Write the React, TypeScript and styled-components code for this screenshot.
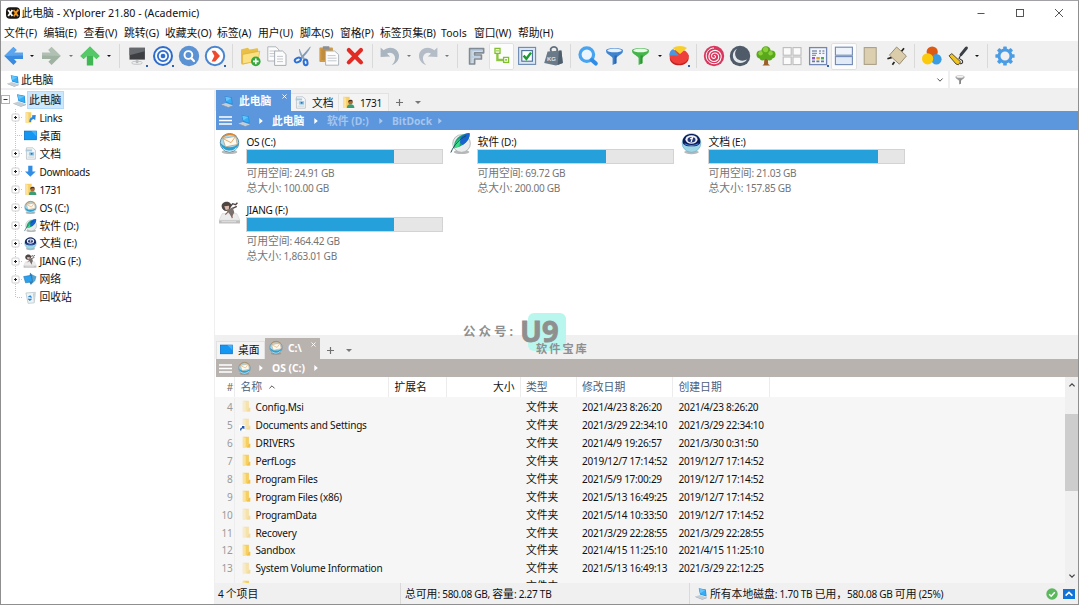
import React from 'react';
import styled, { createGlobalStyle, css } from 'styled-components';

const GlobalStyle = createGlobalStyle`
  * { box-sizing: border-box; }
  body { margin: 0; background: #fff; overflow: hidden; }
  svg { display: block; flex: none; overflow: visible; }
`;

const BLUE = '#5c96dc';
const TAUPE = '#b9b3b0';

/* ---------- text ---------- */

const Run = styled.span<{ $cjk: boolean; $track: number }>`
  font-size: ${p => (p.$cjk ? '10.8px' : '1em')};
  letter-spacing: ${p => (p.$cjk ? 0 : p.$track)}px;
`;

const LabelBox = styled.span<{ $color?: string; $bold?: boolean; $size: number }>`
  white-space: pre;
  line-height: 16px;
  color: ${p => p.$color ?? '#111'};
  font-weight: ${p => (p.$bold ? 700 : 400)};
  font-size: ${p => p.$size}px;
`;

type LabelProps = { text: string; color?: string; bold?: boolean; size?: number; track?: number };

function Label({ text, color, bold, size, track }: LabelProps) {
  const runs = text.split(/([\u3000-\u9fff\uff00-\uffef]+)/).filter(Boolean);
  const spacing = track ?? (bold ? 0 : -0.27);
  return (
    <LabelBox $color={color} $bold={bold} $size={size ?? (bold ? 10.3 : 10.05)}>
      {runs.map((r, i) => (
        <Run key={i} $cjk={/[\u3000-\uffef]/.test(r)} $track={spacing}>{r}</Run>
      ))}
    </LabelBox>
  );
}

/* ---------- small icons (16 unit grid) ---------- */

type IconProps = { size?: number };

const PcIcon = ({ size = 13 }: IconProps) => (
  <svg width={size} height={size} viewBox="0 0 16 16">
    <path d="M.4 11.6 L6 9.8 L14.8 12.8 L9 15z" fill="#c4ced7" />
    <path d="M.4 11.6 L9 15 L14.8 12.8 V13.6 L9 15.8 L.4 12.4z" fill="#8e9aa5" />
    <path d="M4.6 1.4 L13.4 3.2 L14.2 11.8 L6.2 9.2z" fill="#1e86d2" />
    <path d="M5.4 2.3 L12.8 3.8 L13.4 10.8 L6.8 8.6z" fill="#36aef6" />
    <path d="M5.4 2.3 L12.8 3.8 L6.6 7.6z" fill="#66c6fb" />
  </svg>
);

const FolderIcon = ({ size = 13, faded }: IconProps & { faded?: boolean }) => (
  <svg width={size} height={size} viewBox="0 0 16 16" opacity={faded ? 0.5 : 1}>
    <path d="M3.5 1 H11 V11.5 H12 V14 H3.5z" fill="#f6cf62" />
    <path d="M3.5 1 L7 2.5 V14.5 L3.5 13.7z" fill="#fbe39b" />
    <path d="M11 9.5 h1.7 v4.5 H8.5z" fill="#f3c044" />
  </svg>
);

const LinksIcon = () => (
  <svg width="13" height="13" viewBox="0 0 16 16">
    <path d="M2 1.5 H9 V14.5 H2z" fill="#f7cf63" />
    <path d="M2 1.5 L5.5 3 V15 L2 14.2z" fill="#fbe39b" />
    <path d="M6.5 13.5 c0-4 1.5-5.5 3.5-5.8 V5.2 L14.5 5 13.8 11.5 11.8 9.8 c-2 .6-3.4 1.5-3 3.7z" fill="#2f87dd" />
  </svg>
);

const UserFolderIcon = () => (
  <svg width="13" height="13" viewBox="0 0 16 16">
    <path d="M1.5 1 H9.5 V14.5 H1.5z" fill="#f7cf63" />
    <path d="M1.5 1 L5.2 2.5 V15 L1.5 14z" fill="#fbe39b" />
    <path d="M6 14.8 c0-4 2-4.8 4.5-4.8 s4.7 1 4.7 4.8z" fill="#3c9c74" />
    <circle cx="10.5" cy="7.6" r="2.7" fill="#a86a3a" />
    <path d="M7.6 7.5 C7.5 3.8 13.2 3.8 13.3 7 L11 6.2z" fill="#4a3020" />
  </svg>
);

const DesktopIcon = () => (
  <svg width="13" height="13" viewBox="0 0 16 16">
    <rect x=".6" y="2.6" width="14.6" height="10.6" fill="#1496f3" stroke="#0b72c8" />
    <path d="M9 2.6 H15.2 V9z" fill="#3db0ff" />
  </svg>
);

const DocIcon = () => (
  <svg width="13" height="13" viewBox="0 0 16 16">
    <path d="M3 1 H11 L14 4 V15 H3z" fill="#f4f8fa" stroke="#aab4bb" strokeWidth=".8" />
    <path d="M2 3 H10 V5.4 H2z" fill="#a9c9da" />
    <rect x="6.4" y="6.4" width="6" height="4.2" fill="#8ec3e4" />
    <rect x="8.4" y="7.4" width="2" height="2" fill="#2471b0" />
    <path d="M4.5 12.4 h8 M4.5 7.5 h1 M4.5 9.5 h1" stroke="#b8c0c6" strokeWidth=".9" />
  </svg>
);

const DownIcon = () => (
  <svg width="13" height="13" viewBox="0 0 16 16">
    <path d="M5.2 1 h5.2 v7 h4 L7.8 14.5 1.2 8 h4z" fill="#2f8de4" />
  </svg>
);

const MailDrive = ({ size = 14 }: IconProps) => (
  <svg width={size} height={size} viewBox="0 0 20 20">
    <ellipse cx="10" cy="18" rx="7.5" ry="2" fill="#8b8b8b" opacity=".6" />
    <circle cx="10" cy="9.3" r="8.8" fill="#a9dcef" stroke="#3e7c98" strokeWidth=".8" />
    <path d="M1.5 9.5 C3 19 17 20 18.6 9.5 C15 14.5 7 15.5 1.5 9.5z" fill="#2a9fd0" />
    <path d="M4 15 C7 18.4 14 18 16.6 14" stroke="#cfeefa" strokeWidth="1" fill="none" />
    <path d="M3.6 5.2 L15.8 3.2 L17.4 11 L6.2 13.2z" fill="#fffaf0" stroke="#b0906a" strokeWidth=".6" />
    <path d="M3.6 5.2 L11.5 9.2 L15.8 3.2" fill="none" stroke="#dd9a55" strokeWidth=".8" />
    <path d="M3 4.4 C6.4 .3 13.4 .4 16.6 3.2" stroke="#e0862e" strokeWidth="1.2" fill="none" />
  </svg>
);

const FeatherDrive = ({ size = 14 }: IconProps) => (
  <svg width={size} height={size} viewBox="0 0 20 20">
    <ellipse cx="11" cy="18" rx="7.5" ry="2" fill="#8b8b8b" opacity=".6" />
    <circle cx="11" cy="10" r="8.4" fill="#e9ecec" stroke="#a9afb0" strokeWidth=".8" />
    <path d="M4 14 C3 7 9 0.5 18.5 0 C20 6 12 14 4 14z" fill="#18a070" />
    <path d="M8 7.5 C11 2.4 14 .6 18.5 0 C19.6 4 16.5 8.5 12 11.5z" fill="#1763cf" />
    <path d="M4.6 12 C5 9 7.5 6 10 5 L9 12.6 C7 13.6 5.5 14 4.4 14z" fill="#3fd98a" />
    <path d="M.8 18.6 C4 11 9 6 15.5 2.5" stroke="#0c4a52" strokeWidth=".9" fill="none" />
  </svg>
);

const OrbDrive = ({ size = 14 }: IconProps) => (
  <svg width={size} height={size} viewBox="0 0 20 20">
    <ellipse cx="10" cy="18.2" rx="7" ry="2" fill="#8b8b8b" opacity=".6" />
    <circle cx="10" cy="9.5" r="8.9" fill="#9ed6e8" stroke="#6fb0c8" strokeWidth=".7" />
    <path d="M1.6 8 C1.8 -1.4 18.2 -1.4 18.4 8 C18.6 12 14 12.6 10 12.6 S1.4 12 1.6 8z" fill="#0c1a58" />
    <ellipse cx="10" cy="6.2" rx="5.8" ry="4" fill="#eef3fb" />
    <ellipse cx="10" cy="6.4" rx="3.8" ry="2.6" fill="#24397c" />
    <path d="M8.8 5.6 L11 4.4 L9.6 8.6" stroke="#fff" strokeWidth="1.1" fill="none" />
    <path d="M3.4 10.2 C7 12.4 13 12.4 16.6 10.2" stroke="#4c7fd4" strokeWidth="1" fill="none" />
  </svg>
);

const FigureDrive = ({ size = 14 }: IconProps) => (
  <svg width={size} height={size} viewBox="0 0 20 22">
    <path d="M3 12 H17 L20 18.5 H0z" fill="#ececec" stroke="#cfcfcf" strokeWidth=".5" />
    <path d="M0 18.5 H20 V21.5 H0z" fill="#bdbdbd" />
    <path d="M2.4 19.8 h14" stroke="#e9e9e9" strokeWidth=".8" />
    <path d="M2.5 5.5 C2 .5 9 -.6 11 2.4 C12.6 4.5 11 7 10 8 L7.2 9.5 C4.5 9.5 3 8 2.5 5.5z" fill="#4d4544" />
    <path d="M5 5 L9.6 4.6 L9.4 8.2 L6.4 8.6z" fill="#d9b9aa" />
    <path d="M11 5 L13 2.6 15.8 3.6 17.6 1.6 M13 7 L17 5.2" stroke="#4d4544" strokeWidth="1.3" fill="none" />
    <path d="M7 9 L13 6 L14.6 11 L12 15.6 L9.8 12z" fill="#7a706e" />
    <path d="M12 12 L12.6 16.4 M9 10 L6 13" stroke="#8b6257" strokeWidth="1.1" />
  </svg>
);

const NetIcon = () => (
  <svg width="14" height="14" viewBox="0 0 16 16">
    <path d="M8 .8 L11 3 L15.4 5 L14 10 L9 14.6 L7.6 11z" fill="#5aa3cf" />
    <path d="M8 .8 L10.4 4 L10.8 11.8 L9 14.6 L7 11z" fill="#3a7fae" />
    <path d="M.8 5.2 L9.5 3.8 L10.8 11 L3 12.4z" fill="#2aa0ee" stroke="#1f77b4" strokeWidth=".7" />
  </svg>
);

const BinIcon = () => (
  <svg width="13" height="13" viewBox="0 0 16 16">
    <path d="M2.4 2.4 L14 1.6 L12.6 14.6 L5 15.2z" fill="#eef3f5" stroke="#b6c1c6" strokeWidth=".9" />
    <path d="M11 3 L13.4 2.6 L12.2 14z" fill="#c4ced3" />
    <path d="M5.4 7.4 L7.6 6.2 L9.2 8.2 M9.2 9.6 L7.2 11.2 L5.4 9.4" stroke="#2a85d0" strokeWidth="1.7" fill="none" />
  </svg>
);

const Funnel = ({ size, fill, rim, dark }: { size: number; fill: string; rim: string; dark: string }) => (
  <svg width={size} height={size} viewBox="0 0 20 20">
    <path d="M1 4.4 C1 7.4 8 9.6 8 11.8 V19 L12 17 V11.8 C12 9.6 19 7.4 19 4.4z" fill={fill} />
    <path d="M10 9 H12.6 L12 11.8 V17 L10 18z" fill={dark} />
    <ellipse cx="10" cy="3.8" rx="9" ry="2.8" fill={fill} />
    <ellipse cx="10" cy="3.6" rx="7.6" ry="1.9" fill={rim} />
  </svg>
);

/* ---------- toolbar icons (20 unit grid) ---------- */

const tb = (children: React.ReactNode) => (
  <svg width="20" height="20" viewBox="0 0 20 20">{children}</svg>
);

const BackArrow = tb(
  <>
    <path d="M.3 10 L9.4 .9 L12.6 4.1 L10 6.8 H19 V13 H10 L12.6 15.8 L9.4 19z" fill="#3a8be0" />
    <path d="M.3 10 L9.4 .9 L12.6 4.1 L10 6.8 H19 V9.5z" fill="#5aa5ee" />
  </>,
);
const ForwardArrow = tb(
  <>
    <path d="M19.7 10 L10.6 .9 L7.4 4.1 L10 6.8 H1 V13 H10 L7.4 15.8 L10.6 19z" fill="#a0b3a3" />
    <path d="M19.7 10 L10.6 .9 L7.4 4.1 L10 6.8 H1 V9.5z" fill="#b0c0b2" />
  </>,
);
const UpArrow = tb(
  <>
    <path d="M10 .4 L19.6 10 L16.4 13 L13.2 10 V19.4 H6.8 V10 L3.6 13 L.4 10z" fill="#3fb854" />
    <path d="M10 .4 L19.6 10 L16.4 13 L13.2 10 H6.8 L3.6 13 L.4 10z" fill="#55c968" />
  </>,
);
const Monitor = tb(
  <>
    <rect x="2.5" y="1.8" width="15.4" height="11.8" fill="#3c3e41" />
    <path d="M2.5 1.8 H17.9 V5.2 L2.5 9.2z" fill="#66696d" />
    <ellipse cx="10" cy="16.8" rx="5.4" ry="1.6" fill="none" stroke="#c3c6ca" strokeWidth="1" />
    <path d="M8.8 14.2 h2.6 v3 h-2.6z" fill="#b9bcc0" />
  </>,
);
const Target = tb(
  <>
    <circle cx="10" cy="10" r="10" fill="#2e6ccb" />
    <circle cx="10" cy="10" r="7" fill="none" stroke="#f4f8ff" strokeWidth="2" />
    <circle cx="10" cy="10" r="3.3" fill="none" stroke="#f4f8ff" strokeWidth="1.9" />
  </>,
);
const FindCircle = tb(
  <>
    <circle cx="10" cy="10" r="10.2" fill="#5a92d4" />
    <circle cx="9.4" cy="9" r="3.9" fill="none" stroke="#fff" strokeWidth="1.9" />
    <path d="M12.4 12.2 L15 15" stroke="#fff" strokeWidth="2.2" strokeLinecap="round" />
  </>,
);
const GoCircle = tb(
  <>
    <circle cx="10" cy="10" r="9.2" fill="#fff" stroke="#4a86d0" strokeWidth="2" />
    <path d="M6.6 4.8 h3.6 L15 10 l-4.8 5.4 H6.6 L9.4 10z" fill="#ee4a2c" />
  </>,
);
const NewFolder = tb(
  <>
    <path d="M1 5 C1 3.6 1.4 3 2.6 3 L8 1.8 L9.4 3.6 L17 2.2 C18 2.2 18.2 2.8 18.2 3.8 L17.4 15 L3 18.6 C1.6 18.6 1 18 1 16.6z" fill="#e9bf45" />
    <path d="M2.6 8.4 L19.8 5.2 L18 14.8 L2.6 18z" fill="#fbe184" stroke="#d8ab36" strokeWidth=".6" />
    <circle cx="15.8" cy="15.4" r="4.8" fill="#36a83c" />
    <path d="M15.8 12.6 v5.6 M13 15.4 h5.6" stroke="#fff" strokeWidth="1.6" />
  </>,
);
const pageLines = (x: number, y: number) => (
  <path d={`M${x} ${y} h6 M${x} ${y + 2.6} h6 M${x} ${y + 5.2} h6`} stroke="#c4c9ce" strokeWidth="1" />
);
const Copy = tb(
  <>
    <path d="M.8 .8 H9 L12 4 V15 H.8z" fill="#fcfcfc" stroke="#b0b6bb" />
    {pageLines(2.6, 5)}
    <path d="M7.6 5 H15.6 L19 8.4 V19.4 H7.6z" fill="#fcfcfc" stroke="#a8aeb4" />
    {pageLines(10, 10.4)}
  </>,
);
const Cut = tb(
  <>
    <path d="M17.4 .8 C16 5 12 9 8.2 13.4 L6.8 12.6z" fill="#7f97b4" stroke="#7d93ae" strokeWidth=".5" />
    <path d="M6.4 3 C7.6 7 10 11 13 14 L11.4 14.4 C8 10.6 6.4 7 6.4 3z" fill="#8fa6c0" stroke="#8399b4" strokeWidth=".6" />
    <ellipse cx="4.8" cy="14" rx="3.2" ry="2.1" fill="none" stroke="#2d72d6" strokeWidth="2" transform="rotate(-25 4.8 14)" />
    <ellipse cx="12.6" cy="16.4" rx="1.9" ry="2.8" fill="none" stroke="#2d72d6" strokeWidth="2" transform="rotate(-10 12.6 16.4)" />
  </>,
);
const Paste = tb(
  <>
    <rect x=".4" y="1.4" width="13.6" height="14.6" rx="1" fill="#d09a48" />
    <rect x="2.4" y="3.4" width="9.8" height="10.6" fill="#c08c40" />
    <rect x="3.8" y=".2" width="6.6" height="3" rx=".6" fill="#8b8e92" />
    <path d="M6.6 5 H15.6 L19.6 8.6 V19.2 H6.6z" fill="#fdfdfd" stroke="#aeb4ba" />
    <path d="M8.6 9.6 h8 M8.6 12.2 h9 M8.6 14.8 h9" stroke="#c4c9ce" />
  </>,
);
const Delete = tb(
  <path d="M3.8 4 L16 16.4 M16 4 L3.8 16.4" stroke="#e12b25" strokeWidth="4.1" strokeLinecap="round" />,
);
const Undo = tb(
  <path d="M.6 1.4 L3.6 4.2 C9 -.6 18.6 1.4 19 9.6 C19.2 14 16 18 11.8 19 C15 16 15.6 12.6 14.6 10 C13 6.4 9 6 7 7.8 L10.2 10.6 L.6 11z" fill="#a9b5c1" />,
);
const Redo = tb(
  <path d="M19.4 1.4 L16.4 4.2 C11 -.6 1.4 1.4 1 9.6 C.8 14 4 18 8.2 19 C5 16 4.4 12.6 5.4 10 C7 6.4 11 6 13 7.8 L9.8 10.6 L19.4 11z" fill="#b3bcc7" />,
);
const LetterF = tb(
  <>
    <path d="M3.6 2.6 H17.6 V6.8 H8.6 V9 H15.4 V13 H8.6 V18 H3.6z" fill="#d8e2ec" stroke="#828b94" strokeWidth="1.7" strokeLinejoin="round" />
    <path d="M5.8 16.4 V4.7 H16 M6 11 H14" stroke="#b7cbe0" strokeWidth="1.3" fill="none" />
  </>,
);
const TreeNodes = tb(
  <>
    <path d="M5.4 7 V14 H12" stroke="#8cc63f" strokeWidth="2.4" fill="none" />
    <rect x="3" y="2.4" width="5" height="5" fill="#fff" stroke="#7fbf2a" strokeWidth="1.3" />
    <path d="M4 4.9 h3" stroke="#7fbf2a" />
    <rect x="11.6" y="11.4" width="5" height="5" fill="#fff" stroke="#7fbf2a" strokeWidth="1.3" />
    <path d="M13.1 13.9 h2" stroke="#7fbf2a" strokeWidth="1.5" />
  </>,
);
const CheckBox = tb(
  <>
    <rect x="1.6" y="1.4" width="17" height="17" fill="#dbe6f4" stroke="#6c89b2" strokeWidth="1.1" />
    <rect x="4.8" y="4.6" width="10.6" height="10.6" fill="#fff" stroke="#4c6c9c" strokeWidth="1.1" />
    <path d="M6.6 9.6 L9.4 12.8 L14 6.6" stroke="#1c9c30" strokeWidth="2.4" fill="none" />
  </>,
);
const Weight = tb(
  <>
    <path d="M8.6 6 C6 2.6 9 .9 11 .9 S15.6 2.6 13.6 6" fill="none" stroke="#5d6d7c" strokeWidth="1.7" />
    <path d="M4.6 5.6 L18.4 4.6 L19.8 17 L13 19.4 L1.2 17z" fill="#6a7a89" />
    <path d="M16 4.8 L18.4 4.6 L19.8 17 L14.6 19z" fill="#4f5e6c" />
    <text x="4" y="14.6" fontSize="6" fontWeight="700" fill="#dfe5ea" fontFamily="Liberation Sans, sans-serif">KG</text>
  </>,
);
const Search = tb(
  <>
    <circle cx="8.8" cy="8.6" r="6.8" fill="#eaf5fd" stroke="#46a4f0" strokeWidth="3.2" />
    <path d="M13.8 14 L17.8 17.6" stroke="#2f8de6" strokeWidth="4" strokeLinecap="round" />
  </>,
);
const Pie = tb(
  <>
    <path d="M.8 9.6 V13 C2 21.4 18 21.4 19.6 13 V9z" fill="#c22222" />
    <ellipse cx="10.2" cy="10.6" rx="9.4" ry="7.4" fill="#ee3f3a" />
    <path d="M10 9.4 L.2 9.4 C.4 6 1.8 4.2 4.2 3z" fill="#4a98dc" />
    <path d="M11 8 L3.8 2 C7.5 -.8 14.6 -.8 18 2z" fill="#f8cf2a" />
  </>,
);
const Spiral = tb(
  <>
    <circle cx="10" cy="10" r="10.2" fill="#d8385e" />
    <path d="M10 10 c.6-.9 1.9 0 1.5 1.2 c-.6 1.8-3.4 1.5-3.9-.5 c-.6-2.8 2.4-4.5 4.8-3.4 c3.3 1.6 3 6.2-.2 7.7 c-4 1.8-8-1.5-7.2-5.7 c.9-4.6 6.4-6.4 10-3.4 c3.4 3 2.6 8.4-1 10.8" fill="none" stroke="#fff" strokeWidth="1.05" />
    <path d="M14 16.7 C9 19.6 2.2 16 2.2 10 C2.2 5 6 2 10 2" fill="none" stroke="#fff" strokeWidth="1" />
  </>,
);
const Moon = tb(
  <>
    <circle cx="10" cy="10" r="10.2" fill="#4f5b69" />
    <path d="M7 2.8 C1.4 5.8 1.8 13.4 6.4 16 C10.4 18.2 15 16.6 17 13.6 C13.4 15.6 8.4 15 6.2 11.6 C4.4 8.6 4.8 5.4 7 2.8z" fill="#e4e8ed" />
  </>,
);
const Tree = tb(
  <>
    <path d="M8.4 12 H11.8 L12.2 18 L14 19.4 H6.4 L8 18z" fill="#9a5f2b" />
    <g fill="#5aa81c">
      <circle cx="10" cy="4.8" r="4.6" /><circle cx="4.6" cy="8.6" r="4.1" /><circle cx="15.4" cy="8.6" r="4.1" />
      <circle cx="6.6" cy="11.6" r="3" /><circle cx="13.4" cy="11.6" r="3" /><circle cx="10" cy="9" r="4" />
    </g>
    <g fill="#8bd03a"><circle cx="9.6" cy="3.6" r="2.6" /><circle cx="4.6" cy="7.2" r="2.2" /><circle cx="14.6" cy="7.2" r="2.2" /></g>
  </>,
);
const Grid4 = tb(
  <g fill="#fbfbfb" stroke="#bcbcbc" strokeWidth="1.1">
    <rect x="1.2" y="1.6" width="8" height="7.6" /><rect x="11" y="1.6" width="8" height="7.6" />
    <rect x="1.2" y="11" width="8" height="7.6" /><rect x="11" y="11" width="8" height="7.6" />
  </g>,
);
const ListView = tb(
  <>
    <rect x="1.6" y="1.6" width="17" height="17" fill="#f3f6fc" stroke="#7387b4" strokeWidth="1.3" />
    <path d="M4 5 h5 M4 7.4 h5 M4 9.4 h4 M11 5 h2 M14.4 5 h2 M11 7.4 h2 M14.4 7.4 h2" stroke="#8a94ac" strokeWidth="1.4" />
    <rect x="4" y="11" width="3" height="2.4" fill="#9a59b8" /><rect x="8.4" y="11" width="3.4" height="2.4" fill="#e0a520" /><rect x="13" y="11" width="3" height="2.4" fill="#4fb042" />
    <path d="M4 15.4 h3 M8.4 15.4 h3 M13 15.4 h3" stroke="#6b7896" strokeWidth="1.6" />
  </>,
);
const SplitView = tb(
  <>
    <rect x="1.4" y="1.2" width="17" height="8" fill="#eff4fb" stroke="#7189b4" strokeWidth="1.1" />
    <rect x="1.4" y="10.6" width="17" height="8" fill="#e1eaf7" stroke="#7189b4" strokeWidth="1.1" />
  </>,
);
const Sheet = tb(
  <rect x="4.2" y="1.6" width="12" height="16.8" fill="#dccfb0" stroke="#a79b82" strokeWidth="1" />,
);
const RotSheet = tb(
  <>
    <path d="M.4 12.8 L5 11.4 M17 2.2 L14.4 5.6 M5.4 18.8 L7.4 16" stroke="#26221c" strokeWidth="1.7" />
    <path d="M9.6 1 L19.4 10 L12.4 18.2 L2.4 9.2z" fill="#dccdaa" stroke="#8f846e" strokeWidth=".9" />
  </>,
);
const Circles = tb(
  <>
    <circle cx="10.2" cy="6" r="5.6" fill="#dc5a14" />
    <circle cx="14.4" cy="13.2" r="5.2" fill="#3a9ce2" />
    <circle cx="5.6" cy="12.8" r="5.6" fill="#fbca0c" />
  </>,
);
const Brush = tb(
  <>
    <path d="M13 8.6 L18.4 2" stroke="#3a3f46" strokeWidth="3" strokeLinecap="round" />
    <path d="M12.8 9 L11 12.4 L14.4 14.6 C15.4 17 13.6 18 12 17.6" stroke="#333" strokeWidth="1.1" fill="none" />
    <path d="M1 9.8 L3.8 7.6 L12.6 15.8 L10.4 18.8 L8 18z" fill="#f2c21e" stroke="#45402f" strokeWidth=".9" />
  </>,
);
const Gear = tb(
  <>
    <circle cx="10" cy="10" r="6" fill="none" stroke="#4a9ce4" strokeWidth="3" />
    {[0, 45, 90, 135, 180, 225, 270, 315].map(a => (
      <rect key={a} x="8.2" y=".4" width="3.6" height="3.6" rx=".6" fill="#4a9ce4" transform={`rotate(${a} 10 10)`} />
    ))}
  </>,
);

/* ---------- window chrome ---------- */

const Frame = styled.div`
  width: 1079px;
  height: 605px;
  border: 1px solid #8f8f8f;
  border-top-color: #a2a2a6;
  display: flex;
  flex-direction: column;
  position: relative;
  overflow: hidden;
  background: #fff;
  font-family: 'Noto Sans', 'Noto Sans CJK SC', sans-serif;
`;

const TitleBar = styled.div`
  height: 24px;
  display: flex;
  align-items: center;
  padding-left: 5px;
  gap: 1.5px;
  flex: none;
`;

const Controls = styled.div`
  margin-left: auto;
  display: grid;
  grid-template-columns: repeat(3, 39.3px);
  justify-items: center;
  align-items: center;
  margin-right: -1px;
`;

const MenuBar = styled.div`
  height: 16px;
  display: grid;
  grid-template-columns: 39.5px 40px 40.5px 41px 52px 41px 42px 40px 40px 61px 33px 44px 60px;
  align-items: center;
  padding-left: 3px;
  flex: none;
`;

const Toolbar = styled.div`
  height: 30px;
  display: flex;
  align-items: center;
  background: #f0f0f0;
  flex: none;
`;

const ToolButton = styled.div<{ $w: number; $active?: boolean; $menu?: boolean }>`
  width: ${p => p.$w}px;
  height: 27px;
  display: flex;
  align-items: center;
  justify-content: center;
  position: relative;
  border-radius: 2px;
  ${p => p.$active && css`background: #fcfcfc; box-shadow: inset 0 0 0 1px #e0e0e0;`}
  ${p => p.$menu && css`
    &::after { content: ''; position: absolute; right: 2px; bottom: 3px; width: 2px; height: 1.5px; background: #2f5fae; }
  `}
`;

const Caret = styled.div<{ $w: number; $dim?: boolean }>`
  width: ${p => p.$w}px;
  display: flex;
  justify-content: center;
  &::before {
    content: '';
    border: 2px solid transparent;
    border-top-color: ${p => (p.$dim ? '#777' : '#111')};
    border-bottom: 0;
  }
`;

const Divider = styled.div<{ $w: number }>`
  width: ${p => p.$w}px;
  height: 24px;
  display: flex;
  justify-content: center;
  &::before { content: ''; width: 1px; background: #d9d9d9; }
`;

type Tool = { k: 'b' | 'c' | 's'; w: number; icon?: React.ReactNode; active?: boolean; menu?: boolean; dim?: boolean };
const b = (w: number, icon: React.ReactNode, extra: Partial<Tool> = {}): Tool => ({ k: 'b', w, icon, ...extra });
const c = (w: number, dim = false): Tool => ({ k: 'c', w, dim });
const s = (w: number): Tool => ({ k: 's', w });

const tools: Tool[] = [
  b(26, BackArrow), c(10), b(28, ForwardArrow), c(11, true), b(28, UpArrow), c(10), s(10),
  b(26, Monitor, { menu: true }), b(26, Target, { menu: true }), b(26, FindCircle), b(26, GoCircle, { menu: true }), s(9),
  b(26, NewFolder), b(27, Copy), b(26, Cut), b(26, Paste), b(25, Delete), s(10),
  b(25, Undo), c(13, true), b(26, Redo), c(12, true), s(9),
  b(27, LetterF), b(25, TreeNodes, { active: true }), b(26, CheckBox), b(25, Weight), s(10),
  b(26, Search), b(26, <Funnel size={19} fill="#3f83cf" dark="#2c66ad" rim="#e8f1fb" />),
  b(26, <Funnel size={19} fill="#43b649" dark="#2d9434" rim="#eaf8ea" />), c(13), b(26, Pie, { menu: true }), s(8),
  b(27, Spiral), b(26, Moon), b(26, Tree), b(26, Grid4), b(26, ListView, { menu: true }), b(26, SplitView, { active: true }),
  b(26, Sheet), b(27, RotSheet), s(9), b(26, Circles), b(26, Brush), c(12), s(9), b(25, Gear),
];

const AddressBar = styled.div`
  height: 19px;
  display: flex;
  flex: none;
  border-bottom: 2px solid #efefef;
`;

const AddressField = styled.div`
  flex: 1;
  display: flex;
  align-items: center;
  gap: 1px;
  padding: 1px 5px 0 6px;
  & > svg:last-child { margin-left: auto; }
`;

const FilterField = styled.div`
  width: 130px;
  display: flex;
  align-items: center;
  padding-left: 5px;
  border-left: 2px solid #efefef;
`;

const Body = styled.div`
  flex: 1;
  min-height: 0;
  display: flex;
`;

/* ---------- folder tree ---------- */

const TreePanel = styled.div`
  width: 214px;
  flex: none;
  border-right: 1px solid #efefef;
  padding-top: 1px;
`;

const TreeRow = styled.div`
  height: 17.95px;
  display: flex;
  align-items: center;
`;

const RootName = styled.div`
  height: 18px;
  padding: 0 2px 0 1px;
  display: flex;
  align-items: center;
  background: #cce8ff;
  border: 1px solid #b4dcfa;
`;

const Plus = () => (
  <svg width="9" height="9" viewBox="0 0 9 9">
    <rect x="1" y="1" width="7" height="7" rx="1" fill="#fff" stroke="#cfcfcf" />
    <path d="M3 4.5 h3 M4.5 3 v3" stroke="#222" />
  </svg>
);

const Minus = () => (
  <svg width="9" height="9" viewBox="0 0 9 9">
    <rect x=".5" y=".5" width="8" height="8" fill="#fff" stroke="#a6b5cc" />
    <path d="M2.5 4.5 h4" stroke="#333" />
  </svg>
);

const Guide = styled.div<{ $last?: boolean }>`
  width: 22px;
  height: 100%;
  display: flex;
  align-items: center;
  justify-content: flex-end;
  padding-right: 3px;
  background:
    repeating-linear-gradient(to bottom, #c4c4c4 0 1px, transparent 1px 2px) 14px 0 / 1px ${p => (p.$last ? '50%' : '100%')} no-repeat,
    repeating-linear-gradient(to right, #c4c4c4 0 1px, transparent 1px 2px) 16px 50% / 6px 1px no-repeat;
`;

const TreeIconCell = styled.div`
  width: 14px;
  display: flex;
  justify-content: center;
  margin-right: 2.5px;
`;

const treeItems: { name: string; icon: React.ReactNode; plus: boolean }[] = [
  { name: 'Links', icon: <LinksIcon />, plus: true },
  { name: '桌面', icon: <DesktopIcon />, plus: false },
  { name: '文档', icon: <DocIcon />, plus: true },
  { name: 'Downloads', icon: <DownIcon />, plus: true },
  { name: '1731', icon: <UserFolderIcon />, plus: true },
  { name: 'OS (C:)', icon: <MailDrive size={13} />, plus: true },
  { name: '软件 (D:)', icon: <FeatherDrive size={13} />, plus: true },
  { name: '文档 (E:)', icon: <OrbDrive size={13} />, plus: true },
  { name: 'JIANG (F:)', icon: <FigureDrive size={14} />, plus: true },
  { name: '网络', icon: <NetIcon />, plus: true },
  { name: '回收站', icon: <BinIcon />, plus: false },
];

/* ---------- panes ---------- */

const Panes = styled.div`
  flex: 1;
  min-width: 0;
  display: flex;
  flex-direction: column;
`;

const TabStrip = styled.div<{ $h: number }>`
  height: ${p => p.$h}px;
  display: flex;
  align-items: flex-end;
  background: #f0f0f0;
  padding-left: 1px;
  flex: none;
`;

const Tab = styled.div<{ $w: number; $active?: string; $lift?: boolean }>`
  width: ${p => p.$w}px;
  height: ${p => (p.$active ? '21px' : '18px')};
  padding-left: ${p => (p.$active ? 4 : 3)}px;
  padding-bottom: ${p => (p.$lift ? 2 : 0)}px;
  display: flex;
  align-items: center;
  gap: 5px;
  position: relative;
  background: ${p => p.$active ?? '#f4f4f4'};
  border: 1px solid ${p => p.$active ?? '#e2e2e2'};
  border-bottom: 0;
  & + & { border-left: 0; }
`;

const Close = styled.svg`
  position: absolute;
  right: 3px;
  top: 3px;
`;

const CloseMark = () => (
  <Close width="5" height="5" viewBox="0 0 5 5">
    <path d="M.5 .5 L4.5 4.5 M4.5 .5 L.5 4.5" stroke="#fff" strokeWidth=".9" />
  </Close>
);

const TabExtras = styled.div`
  height: 18px;
  display: flex;
  align-items: center;
  gap: 12px;
  padding: 1px 0 0 7px;
`;

const Extras = () => (
  <TabExtras>
    <svg width="7" height="7" viewBox="0 0 7 7"><path d="M3.5 0 V7 M0 3.5 H7" stroke="#707070" strokeWidth="1.2" /></svg>
    <svg width="6" height="3" viewBox="0 0 6 3"><path d="M0 0 H6 L3 3z" fill="#777" /></svg>
  </TabExtras>
);

const Crumbs = styled.div<{ $bg: string; $h: number }>`
  height: ${p => p.$h}px;
  margin-left: 1px;
  display: flex;
  align-items: center;
  background: ${p => p.$bg};
  padding-left: 3px;
  flex: none;
`;

const CrumbCell = styled.div<{ $w: number }>`
  width: ${p => p.$w}px;
  display: flex;
  align-items: center;
`;

const Burger = () => (
  <svg width="13" height="9" viewBox="0 0 13 9"><path d="M0 1 H13 M0 4.5 H13 M0 8 H13" stroke="#fff" strokeWidth="1.4" /></svg>
);

const CrumbArrow = ({ dim }: { dim?: boolean }) => (
  <svg width="4" height="6" viewBox="0 0 4 6"><path d="M.3 0 L3.8 3 L.3 6z" fill={dim ? '#a9c8ee' : '#fff'} /></svg>
);

const DriveArea = styled.div`
  height: 205px;
  flex: none;
  display: grid;
  grid-template-columns: repeat(3, 231px);
  grid-auto-rows: 68px;
  padding: 3px 0 0 4px;
`;

const DriveCard = styled.div`
  display: flex;
  gap: 6.4px;
`;

const DriveIcon = styled.div`
  width: 21px;
  display: flex;
  justify-content: center;
`;

const DriveInfo = styled.div`
  width: 197px;
  display: flex;
  flex-direction: column;
`;

const DriveName = styled.div`
  height: 16px;
  padding-top: 1px;
  display: flex;
  align-items: center;
`;

const Meter = styled.div`
  height: 15px;
  margin-bottom: 1px;
  background: #e6e6e6;
  border: 1px solid #d3d3d3;
  flex: none;
`;

const MeterFill = styled.div`
  height: 13px;
  background: #26a0da;
`;

const DriveLine = styled.div`
  height: 15.4px;
  display: flex;
  align-items: center;
`;

const drives = [
  { name: 'OS (C:)', used: 75.1, free: '24.91 GB', total: '100.00 GB', icon: <MailDrive size={21} /> },
  { name: '软件 (D:)', used: 65.2, free: '69.72 GB', total: '200.00 GB', icon: <FeatherDrive size={21} /> },
  { name: '文档 (E:)', used: 86.7, free: '21.03 GB', total: '157.85 GB', icon: <OrbDrive size={21} /> },
  { name: 'JIANG (F:)', used: 75.1, free: '464.42 GB', total: '1,863.01 GB', icon: <FigureDrive size={23} /> },
];

const ListArea = styled.div`
  flex: 1;
  min-height: 0;
  display: flex;
`;

const ListMain = styled.div`
  flex: 1;
  overflow: hidden;
  background: #f6f6f6;
`;

const columns = css`
  display: grid;
  grid-template-columns: 20px 154px 58px 73.5px 56px 96.5px 96.5px;
`;

const HeaderRow = styled.div`
  ${columns}
  height: 20px;
  margin-bottom: 1px;
  background: #fff;
`;

const HeaderCell = styled.div<{ $right?: boolean; $pad?: number }>`
  display: flex;
  align-items: center;
  gap: 7px;
  justify-content: ${p => (p.$right ? 'flex-end' : 'flex-start')};
  padding: ${p => (p.$right ? `0 ${p.$pad ?? 5}px 0 0` : '0 0 0 5.5px')};
  border-right: 1px solid #ececec;
`;

const FileRow = styled.div`
  ${columns}
  height: 17.95px;
`;

const Cell = styled.div<{ $right?: boolean; $line?: boolean }>`
  display: flex;
  align-items: center;
  gap: 3px;
  padding-left: ${p => (p.$right ? 0 : 5.5)}px;
  padding-right: ${p => (p.$right ? 1.5 : 0)}px;
  justify-content: ${p => (p.$right ? 'flex-end' : 'flex-start')};
  border-right: 1px solid ${p => (p.$line ? '#ededed' : 'transparent')};
`;

const FolderSlot = styled.div`
  position: relative;
  display: flex;
  margin-left: -1px;
`;

const Shortcut = styled.svg`
  position: absolute;
  left: -1px;
  bottom: 0;
`;

const files: [number, string, string, string, boolean?, boolean?][] = [
  [4, 'Config.Msi', '2021/4/23 8:26:20', '2021/4/23 8:26:20', true],
  [5, 'Documents and Settings', '2021/3/29 22:34:10', '2021/3/29 22:34:10', true, true],
  [6, 'DRIVERS', '2021/4/9 19:26:57', '2021/3/30 0:31:50'],
  [7, 'PerfLogs', '2019/12/7 17:14:52', '2019/12/7 17:14:52'],
  [8, 'Program Files', '2021/5/9 17:00:29', '2019/12/7 17:14:52'],
  [9, 'Program Files (x86)', '2021/5/13 16:49:25', '2019/12/7 17:14:52'],
  [10, 'ProgramData', '2021/5/14 10:33:50', '2019/12/7 17:14:52', true],
  [11, 'Recovery', '2021/3/29 22:28:55', '2021/3/29 22:28:55', true],
  [12, 'Sandbox', '2021/4/15 11:25:10', '2021/4/15 11:25:10'],
  [13, 'System Volume Information', '2021/5/13 16:49:13', '2021/3/29 22:12:25', true],
];

const ScrollBar = styled.div`
  width: 13px;
  background: #f0f0f0;
  display: flex;
  flex-direction: column;
  align-items: center;
  padding: 6px 0 5px;
`;

const Thumb = styled.div`
  width: 13px;
  height: 77px;
  margin-top: 27px;
  margin-bottom: auto;
  background: #cdcdcd;
`;

const StatusBar = styled.div`
  height: 21px;
  display: flex;
  background: #f0f0f0;
  flex: none;
`;

const StatusCell = styled.div<{ $w?: number; $pad: number }>`
  ${p => (p.$w ? css`width: ${p.$w}px;` : css`flex: 1;`)}
  display: flex;
  align-items: center;
  gap: 2px;
  padding-left: ${p => p.$pad}px;
  & + & { border-left: 1px solid #dadada; }
`;

const StatusIcons = styled.div`
  margin-left: auto;
  padding-right: 3px;
  display: flex;
  align-items: center;
  gap: 5px;
`;

/* ---------- floating watermark ---------- */

const Watermark = styled.div`
  position: absolute;
  left: 461px;
  top: 312px;
  width: 128px;
  height: 44px;
  font-family: 'Noto Sans', 'Noto Sans CJK SC', sans-serif;
  font-weight: 700;
  color: #8f8f8f;
`;

const MarkTile = styled.div`
  position: absolute;
  left: 66px;
  top: 0;
  width: 38px;
  height: 38px;
  border-radius: 6px;
  background: #b9f6ee;
`;

const MarkText = styled.div<{ $x: number; $y: number; $size: number; $gap?: number; $round?: boolean }>`
  position: absolute;
  left: ${p => p.$x}px;
  top: ${p => p.$y}px;
  font-size: ${p => p.$size}px;
  line-height: 1;
  letter-spacing: ${p => p.$gap ?? 0}px;
  white-space: nowrap;
  ${p => p.$round && css`
    line-height: .8;
    -webkit-text-stroke: .8px #8f8f8f;
  `}
`;

const menus = ['文件(F)', '编辑(E)', '查看(V)', '跳转(G)', '收藏夹(O)', '标签(A)', '用户(U)', '脚本(S)', '窗格(P)', '标签页集(B)', 'Tools', '窗口(W)', '帮助(H)'];

export default function App() {
  return (
    <>
      <GlobalStyle />
      <Frame>
        <TitleBar>
          <svg width="14" height="12" viewBox="0 0 14 12">
            <rect x="0" y=".3" width="14" height="11.4" rx="4" fill="#1a1715" />
            <path d="M2.2 3 L6.4 9 M6.4 3 L2.2 9" stroke="#fff" strokeWidth="1.8" />
            <path d="M7.4 3 L9.8 6 L7.8 9.4 M12.4 2.6 L9.8 6 L12 9.2" stroke="#f39a1e" strokeWidth="1.8" fill="none" />
          </svg>
          <Label text="此电脑 - XYplorer 21.80 - (Academic)" size={10.7} track={0} />
          <Controls>
            <svg width="8" height="8" viewBox="0 0 8 8"><path d="M.5 4.5 H7.5" stroke="#555" /></svg>
            <svg width="8" height="8" viewBox="0 0 8 8"><rect x=".5" y=".5" width="7" height="7" fill="none" stroke="#444" strokeWidth=".9" /></svg>
            <svg width="8" height="8" viewBox="0 0 8 8"><path d="M0 0 L8 8 M8 0 L0 8" stroke="#444" strokeWidth=".9" /></svg>
          </Controls>
        </TitleBar>
        <MenuBar>{menus.map(m => <Label key={m} text={m} size={10.4} track={m === 'Tools' ? 0.1 : -0.1} />)}</MenuBar>
        <Toolbar>
          {tools.map((t, i) =>
            t.k === 'b' ? <ToolButton key={i} $w={t.w} $active={t.active} $menu={t.menu}>{t.icon}</ToolButton>
              : t.k === 'c' ? <Caret key={i} $w={t.w} $dim={t.dim} />
                : <Divider key={i} $w={t.w} />)}
        </Toolbar>
        <AddressBar>
          <AddressField>
            <PcIcon />
            <Label text="此电脑" />
            <svg width="6" height="4" viewBox="0 0 6 4"><path d="M.4 .5 L3 3.2 L5.6 .5" stroke="#555" fill="none" /></svg>
          </AddressField>
          <FilterField><Funnel size={10} fill="#9c9c9c" dark="#858585" rim="#f3f3f3" /></FilterField>
        </AddressBar>
        <Body>
          <TreePanel>
            <TreeRow>
              <Minus />
              <svg width="3" height="1" />
              <PcIcon size={14} />
              <RootName><Label text="此电脑" /></RootName>
            </TreeRow>
            {treeItems.map((t, i) => (
              <TreeRow key={t.name}>
                <Guide $last={i === treeItems.length - 1}>{t.plus && <Plus />}</Guide>
                <TreeIconCell>{t.icon}</TreeIconCell>
                <Label text={t.name} />
              </TreeRow>
            ))}
          </TreePanel>
          <Panes>
            <TabStrip $h={21}>
              <Tab $w={75} $active={BLUE}><PcIcon /><Label text="此电脑" color="#fff" bold /><CloseMark /></Tab>
              <Tab $w={48}><DocIcon /><Label text="文档" /></Tab>
              <Tab $w={50}><UserFolderIcon /><Label text="1731" /></Tab>
              <Extras />
            </TabStrip>
            <Crumbs $bg={BLUE} $h={19}>
              <CrumbCell $w={19}><Burger /></CrumbCell>
              <CrumbCell $w={21}><PcIcon /></CrumbCell>
              <CrumbCell $w={13}><CrumbArrow /></CrumbCell>
              <CrumbCell $w={42}><Label text="此电脑" color="#fff" bold /></CrumbCell>
              <CrumbCell $w={13}><CrumbArrow /></CrumbCell>
              <CrumbCell $w={52}><Label text="软件 (D:)" color="#a4c5ee" bold /></CrumbCell>
              <CrumbCell $w={13}><CrumbArrow dim /></CrumbCell>
              <CrumbCell $w={46}><Label text="BitDock" color="#a4c5ee" bold /></CrumbCell>
              <CrumbArrow dim />
            </Crumbs>
            <DriveArea>
              {drives.map(d => (
                <DriveCard key={d.name}>
                  <DriveIcon>{d.icon}</DriveIcon>
                  <DriveInfo>
                    <DriveName><Label text={d.name} /></DriveName>
                    <Meter><MeterFill style={{ width: `${d.used}%` }} /></Meter>
                    <DriveLine><Label text={`可用空间: ${d.free}`} color="#757575" /></DriveLine>
                    <DriveLine><Label text={`总大小: ${d.total}`} color="#757575" /></DriveLine>
                  </DriveInfo>
                </DriveCard>
              ))}
            </DriveArea>
            <TabStrip $h={24}>
              <Tab $w={49} $lift><DesktopIcon /><Label text="桌面" /></Tab>
              <Tab $w={55} $active={TAUPE} $lift><MailDrive size={14} /><Label text="C:\" color="#fff" bold /><CloseMark /></Tab>
              <Extras />
            </TabStrip>
            <Crumbs $bg={TAUPE} $h={18}>
              <CrumbCell $w={19}><Burger /></CrumbCell>
              <CrumbCell $w={21}><MailDrive size={13} /></CrumbCell>
              <CrumbCell $w={13}><CrumbArrow /></CrumbCell>
              <CrumbCell $w={42}><Label text="OS (C:)" color="#fff" bold /></CrumbCell>
              <CrumbArrow />
            </Crumbs>
            <ListArea>
              <ListMain>
                <HeaderRow>
                  <HeaderCell $right $pad={1}><Label text="#" color="#6d6d6d" /></HeaderCell>
                  <HeaderCell>
                    <Label text="名称" color="#4c607a" />
                    <svg width="6" height="4" viewBox="0 0 6 4"><path d="M.4 3.4 L3 .8 L5.6 3.4" stroke="#555" fill="none" /></svg>
                  </HeaderCell>
                  <HeaderCell><Label text="扩展名" /></HeaderCell>
                  <HeaderCell $right><Label text="大小" /></HeaderCell>
                  <HeaderCell><Label text="类型" color="#4c607a" /></HeaderCell>
                  <HeaderCell><Label text="修改日期" color="#4c607a" /></HeaderCell>
                  <HeaderCell><Label text="创建日期" color="#4c607a" /></HeaderCell>
                </HeaderRow>
                {files.map(([n, name, mod, created, faded, link]) => (
                  <FileRow key={n}>
                    <Cell $right $line><Label text={String(n)} color="#9a9a9a" /></Cell>
                    <Cell>
                      <FolderSlot>
                        <FolderIcon faded={faded} />
                        {link && (
                          <Shortcut width="6" height="6" viewBox="0 0 6 6">
                            <rect width="6" height="6" fill="#fff" />
                            <path d="M1 5.4 C1 3 2 2.4 3 2.4 V1 L5.4 1 V4 L4 3.6 C2.8 3.6 2.4 4 2.4 5.4z" fill="#1e56b0" />
                          </Shortcut>
                        )}
                      </FolderSlot>
                      <Label text={name} track={-0.2} />
                    </Cell>
                    <Cell />
                    <Cell />
                    <Cell><Label text="文件夹" /></Cell>
                    <Cell><Label text={mod} /></Cell>
                    <Cell><Label text={created} /></Cell>
                  </FileRow>
                ))}
                <FileRow>
                  <Cell $right $line />
                  <Cell><FolderSlot><FolderIcon /></FolderSlot></Cell>
                  <Cell />
                  <Cell />
                  <Cell><Label text="文件夹" /></Cell>
                </FileRow>
              </ListMain>
              <ScrollBar>
                <svg width="6" height="4" viewBox="0 0 6 4"><path d="M.4 3.4 L3 .8 L5.6 3.4" stroke="#444" strokeWidth="1.3" fill="none" /></svg>
                <Thumb />
                <svg width="6" height="4" viewBox="0 0 6 4"><path d="M.4 .6 L3 3.2 L5.6 .6" stroke="#444" strokeWidth="1.3" fill="none" /></svg>
              </ScrollBar>
            </ListArea>
            <StatusBar>
              <StatusCell $w={185} $pad={3}><Label text="4 个项目" /></StatusCell>
              <StatusCell $w={289} $pad={4}><Label text="总可用: 580.08 GB, 容量: 2.27 TB" /></StatusCell>
              <StatusCell $pad={5}>
                <PcIcon size={13} />
                <Label text="所有本地磁盘: 1.70 TB 已用，580.08 GB 可用 (25%)" />
                <StatusIcons>
                  <svg width="12" height="12" viewBox="0 0 12 12">
                    <circle cx="6" cy="6" r="5.7" fill="#5cb85c" />
                    <path d="M3.2 6.2 L5.2 8.2 L8.8 4.2" stroke="#fff" strokeWidth="1.5" fill="none" />
                  </svg>
                  <svg width="12" height="10" viewBox="0 0 12 10">
                    <rect width="12" height="10" fill="#1173d8" />
                    <path d="M2.6 6.6 L6 3.4 L9.4 6.6" stroke="#fff" strokeWidth="1.5" fill="none" />
                  </svg>
                </StatusIcons>
              </StatusCell>
            </StatusBar>
          </Panes>
        </Body>
        <Watermark>
          <MarkTile />
          <MarkText $x={1} $y={13} $size={12.5} $gap={3}>公众号:</MarkText>
          <MarkText $x={58} $y={6} $size={29} $round>U9</MarkText>
          <MarkText $x={74} $y={30} $size={11.2} $gap={2}>软件宝库</MarkText>
        </Watermark>
      </Frame>
    </>
  );
}
